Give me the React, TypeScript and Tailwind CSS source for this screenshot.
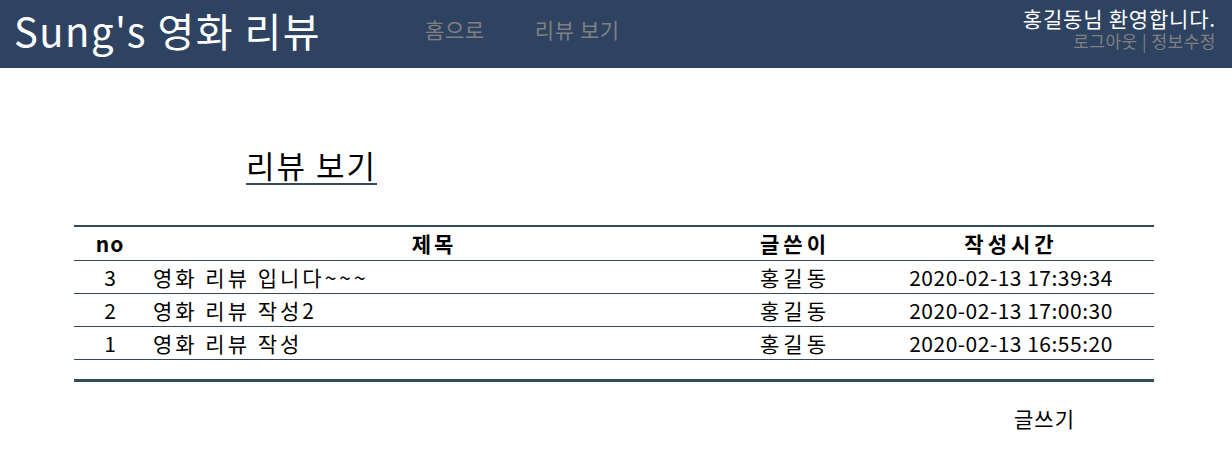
import React from 'react';

const FONT = { fontFamily: '"Noto Sans CJK KR", "Noto Sans", sans-serif' };

const reviews = [
  { no: 3, title: '영화 리뷰 입니다~~~', writer: '홍길동', date: '2020-02-13 17:39:34' },
  { no: 2, title: '영화 리뷰 작성2', writer: '홍길동', date: '2020-02-13 17:00:30' },
  { no: 1, title: '영화 리뷰 작성', writer: '홍길동', date: '2020-02-13 16:55:20' },
];

export default function App() {
  return (
    <div className="w-[1232px] h-[470px] bg-white text-black" style={FONT}>
      {/* Header */}
      <header className="h-[68px] bg-[#2e4362] flex items-center pl-[14px] pr-[16px]">
        <div className="w-[411px] pb-[9px]">
          <h1 className="text-[40px] leading-none text-white font-normal tracking-[1.5px]">Sung's 영화 리뷰</h1>
        </div>
        <nav className="flex gap-[50px] text-[21px] leading-none text-[#808080] pb-[10px] tracking-[0.6px]">
          <span>홈으로</span>
          <span>리뷰 보기</span>
        </nav>
        <div className="ml-auto flex flex-col items-end gap-[2px] pb-[11px]">
          <span className="text-[21px] leading-[22px] text-white tracking-[0.8px]">홍길동님 환영합니다.</span>
          <span className="text-[17px] leading-[20px] text-[#808080] tracking-[0.5px]">로그아웃 | 정보수정</span>
        </div>
      </header>

      {/* Content */}
      <main className="px-[74px] pt-[79px]">
        <div className="pl-[172px]">
          <h2 className="inline-block text-[31px] leading-[36px] border-b-2 border-[#34495e] font-normal tracking-[2px]">리뷰 보기</h2>
        </div>

        <table className="w-[1080px] mt-[40px] border-collapse border-t-2 border-b-[3px] border-[#34495e] text-[21px]">
          <thead>
            <tr className="border-b border-[#34495e] h-[34px]">
              <th className="w-[72px] font-bold leading-[24px] tracking-[1px]">no</th>
              <th className="w-[576px] font-bold leading-[24px] tracking-[3px]">제목</th>
              <th className="w-[146px] font-bold leading-[24px] tracking-[4px]">글쓴이</th>
              <th className="font-bold leading-[24px] tracking-[4px]">작성시간</th>
            </tr>
          </thead>
          <tbody>
            {reviews.map((r) => (
              <tr key={r.no} className="border-b border-[#34495e] h-[33px]">
                <td className="text-center leading-[24px]">{r.no}</td>
                <td className="pl-[7px] leading-[24px] tracking-[3px]">{r.title}</td>
                <td className="text-center leading-[24px] tracking-[4px]">{r.writer}</td>
                <td className="text-center leading-[24px] tracking-[0.5px]">{r.date}</td>
              </tr>
            ))}
            <tr className="h-[21px]">
              <td colSpan={4}></td>
            </tr>
          </tbody>
        </table>

        <div className="w-[1080px] flex justify-end pr-[79px] mt-[21px]">
          <span className="text-[21px] leading-[30px] tracking-[1px]">글쓰기</span>
        </div>
      </main>
    </div>
  );
}
